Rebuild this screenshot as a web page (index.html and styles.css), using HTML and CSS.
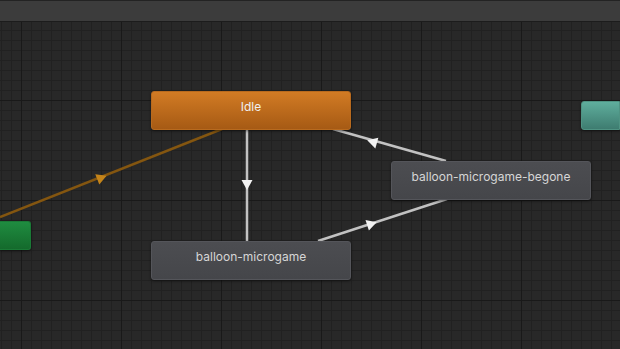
FILE: index.html
```html
<!DOCTYPE html>
<html lang="en">
<head>
  <meta charset="UTF-8" />
  <meta name="viewport" content="width=device-width, initial-scale=1.0" />
  <title>Animator</title>
  <link rel="stylesheet" href="styles.css">
</head>
<body>
  <div class="toolbar"></div>
  <div class="graph">
    <svg class="links" viewBox="0 0 620 327" width="620" height="327">
      <!-- entry -> Idle -->
      <line x1="0" y1="195" x2="222" y2="107" class="link link-entry" />
      <polygon points="6,0 -4,-5.5 -4,5.5" class="head head-entry" transform="translate(101 156) rotate(-21.6)" />
      <!-- Idle -> balloon-microgame -->
      <line x1="247" y1="108" x2="247" y2="219" class="link" />
      <polygon points="6,0 -4,-5.5 -4,5.5" class="head" transform="translate(247 162) rotate(90)" />
      <!-- begone -> Idle -->
      <line x1="446" y1="139" x2="333" y2="107" class="link" />
      <polygon points="6,0 -4,-5.5 -4,5.5" class="head" transform="translate(373 120) rotate(195.8)" />
      <!-- balloon-microgame -> begone -->
      <line x1="318" y1="219" x2="447" y2="177" class="link" />
      <polygon points="6,0 -4,-5.5 -4,5.5" class="head" transform="translate(371 202) rotate(-18)" />
    </svg>

    <div class="node node-entry"></div>
    <div class="node node-any"></div>
    <div class="node node-default node-idle">Idle</div>
    <div class="node node-state node-begone">balloon-microgame-begone</div>
    <div class="node node-state node-micro">balloon-microgame</div>
  </div>
</body>
</html>
```

FILE: styles.css
```css
* {
  box-sizing: border-box;
  margin: 0;
  padding: 0;
}

html, body {
  width: 620px;
  height: 349px;
  overflow: hidden;
  background: #282828;
  font-family: Inter, 'Liberation Sans', sans-serif;
}

body {
  display: flex;
  flex-direction: column;
}

.toolbar {
  height: 22px;
  flex: none;
  background: #3c3c3c;
  border-top: 1px solid #232323;
  border-bottom: 1px solid #1c1c1c;
}

.graph {
  flex: 1;
  position: relative;
  overflow: hidden;
  background-color: #282828;
  background-image:
    linear-gradient(#191919 1px, transparent 1px),
    linear-gradient(90deg, #191919 1px, transparent 1px),
    linear-gradient(#212121 1px, transparent 1px),
    linear-gradient(90deg, #212121 1px, transparent 1px);
  background-size: 100px 100px, 100px 100px, 10px 10px, 10px 10px;
  background-position: 0 78px, 21px 0, 0 8px, 1px 0;
}

.links {
  position: absolute;
  left: 0;
  top: 0;
}

.link {
  stroke: #c2c2c2;
  stroke-width: 2.5;
}

.link-entry {
  stroke: #845610;
  stroke-width: 2.5;
}

.head {
  fill: #f2f2f2;
}

.head-entry {
  fill: #c4841a;
}

.node {
  position: absolute;
  width: 200px;
  height: 39px;
  border-radius: 3px;
  padding-top: 7px;
  font-size: 12px;
  line-height: 16px;
  text-align: center;
  box-shadow: 0 1px 3px rgba(0, 0, 0, 0.5);
}

.node-default {
  background: linear-gradient(#d27b24, #a65a14);
  border: 1px solid #b86a1e;
  color: #f0f0f0;
}

.node-state {
  background: linear-gradient(#4c4d51, #45464a);
  border: 1px solid #54555a;
  color: #d6d6d6;
}

.node-idle {
  left: 151px;
  top: 69px;
}

.node-begone {
  left: 391px;
  top: 139px;
}

.node-micro {
  left: 151px;
  top: 219px;
}

.node-any {
  left: 581px;
  top: 79px;
  width: 39px;
  height: 29px;
  border-radius: 3px 0 0 3px;
  border-right: none;
  background: linear-gradient(#5fae9d, #3e7c70);
  border: 1px solid #4f9383;
}

.node-entry {
  left: 0;
  top: 199px;
  width: 31px;
  height: 29px;
  border-radius: 0 3px 3px 0;
  background: linear-gradient(#1f8c40, #146a2c);
  border: 1px solid #1a7a36;
  border-left: none;
}
```
